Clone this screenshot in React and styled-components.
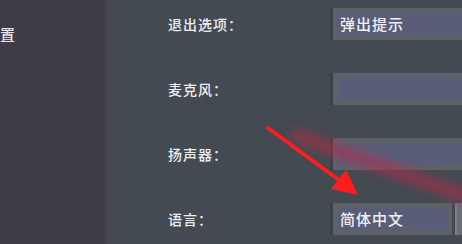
import React from 'react'
import styled, { createGlobalStyle } from 'styled-components'

const Global = createGlobalStyle`
  html, body { margin: 0; padding: 0; background: #434a52; }
  body { font-family: "Noto Sans CJK SC", "Noto Sans", sans-serif; }
`

const rows = [
  { label: '退出选项：', value: '弹出提示' },
  { label: '麦克风：', value: '' },
  { label: '扬声器：', value: '' },
  { label: '语言：', value: '简体中文', select: true },
]

function App() {
  return (
    <Page>
      <Global />
      <Sidebar>
        <NavItem>置</NavItem>
      </Sidebar>
      <Main>
        {rows.map(r => (
          <Row key={r.label}>
            <Label>{r.label}</Label>
            {r.select ? (
              <SelectWrap>
                <Field $short>{r.value}</Field>
                <DropButton />
              </SelectWrap>
            ) : (
              <Field>{r.value}</Field>
            )}
          </Row>
        ))}
      </Main>
      <Overlay viewBox="0 0 462 244" width="462" height="244">
        <defs>
          <filter id="blur" x="-20%" y="-50%" width="140%" height="200%">
            <feGaussianBlur stdDeviation="5" />
          </filter>
        </defs>
        <line x1="292" y1="134" x2="470" y2="198" stroke="#b82c48" strokeWidth="14" opacity="0.55" filter="url(#blur)" />
        <line x1="268" y1="128" x2="343" y2="183" stroke="#ff1d1d" strokeWidth="4" strokeLinecap="round" />
        <polygon points="358,195 331,189 346,170" fill="#ff1d1d" />
      </Overlay>
    </Page>
  )
}

export default App

const Page = styled.div`
position:relative;
display:flex;
width:462px;
height:244px;
overflow:hidden;
`

const Sidebar = styled.div`
width:111px;
flex-shrink:0;
background:linear-gradient(to right, #3f3c48 0, #3f3c48 104px, #4a4652 108px, #474650 111px);
padding-top:24px;
box-sizing:border-box;
`

const NavItem = styled.div`
color:#e6e6ea;
font-size:15px;
font-weight:500;
line-height:20px;
`

const Main = styled.div`
flex:1;
padding:8px 0 0 57px;
display:flex;
flex-direction:column;
gap:33px;
overflow:hidden;
`

const Row = styled.div`
display:grid;
grid-template-columns:165px 1fr;
align-items:center;
height:32px;
`

const Label = styled.div`
color:#eceef2;
font-size:14px;
font-weight:500;
letter-spacing:1px;
`

const SelectWrap = styled.div`
display:flex;
gap:3px;
height:32px;
`

const Field = styled.div`
box-sizing:border-box;
height:32px;
width:${p => (p.$short ? '119px' : '180px')};
flex-shrink:0;
border:5px solid #5d6268;
background:#5a5d77;
box-shadow:-3px 0 0 #3b4149;
color:#f0f1f4;
font-size:15px;
font-weight:500;
letter-spacing:1px;
line-height:22px;
padding-left:2px;
`

const DropButton = styled.div`
width:20px;
height:32px;
background:#6a6f76;
border-left:2px solid #7c8188;
`

const Overlay = styled.svg`
position:absolute;
left:0;
top:0;
pointer-events:none;
`
